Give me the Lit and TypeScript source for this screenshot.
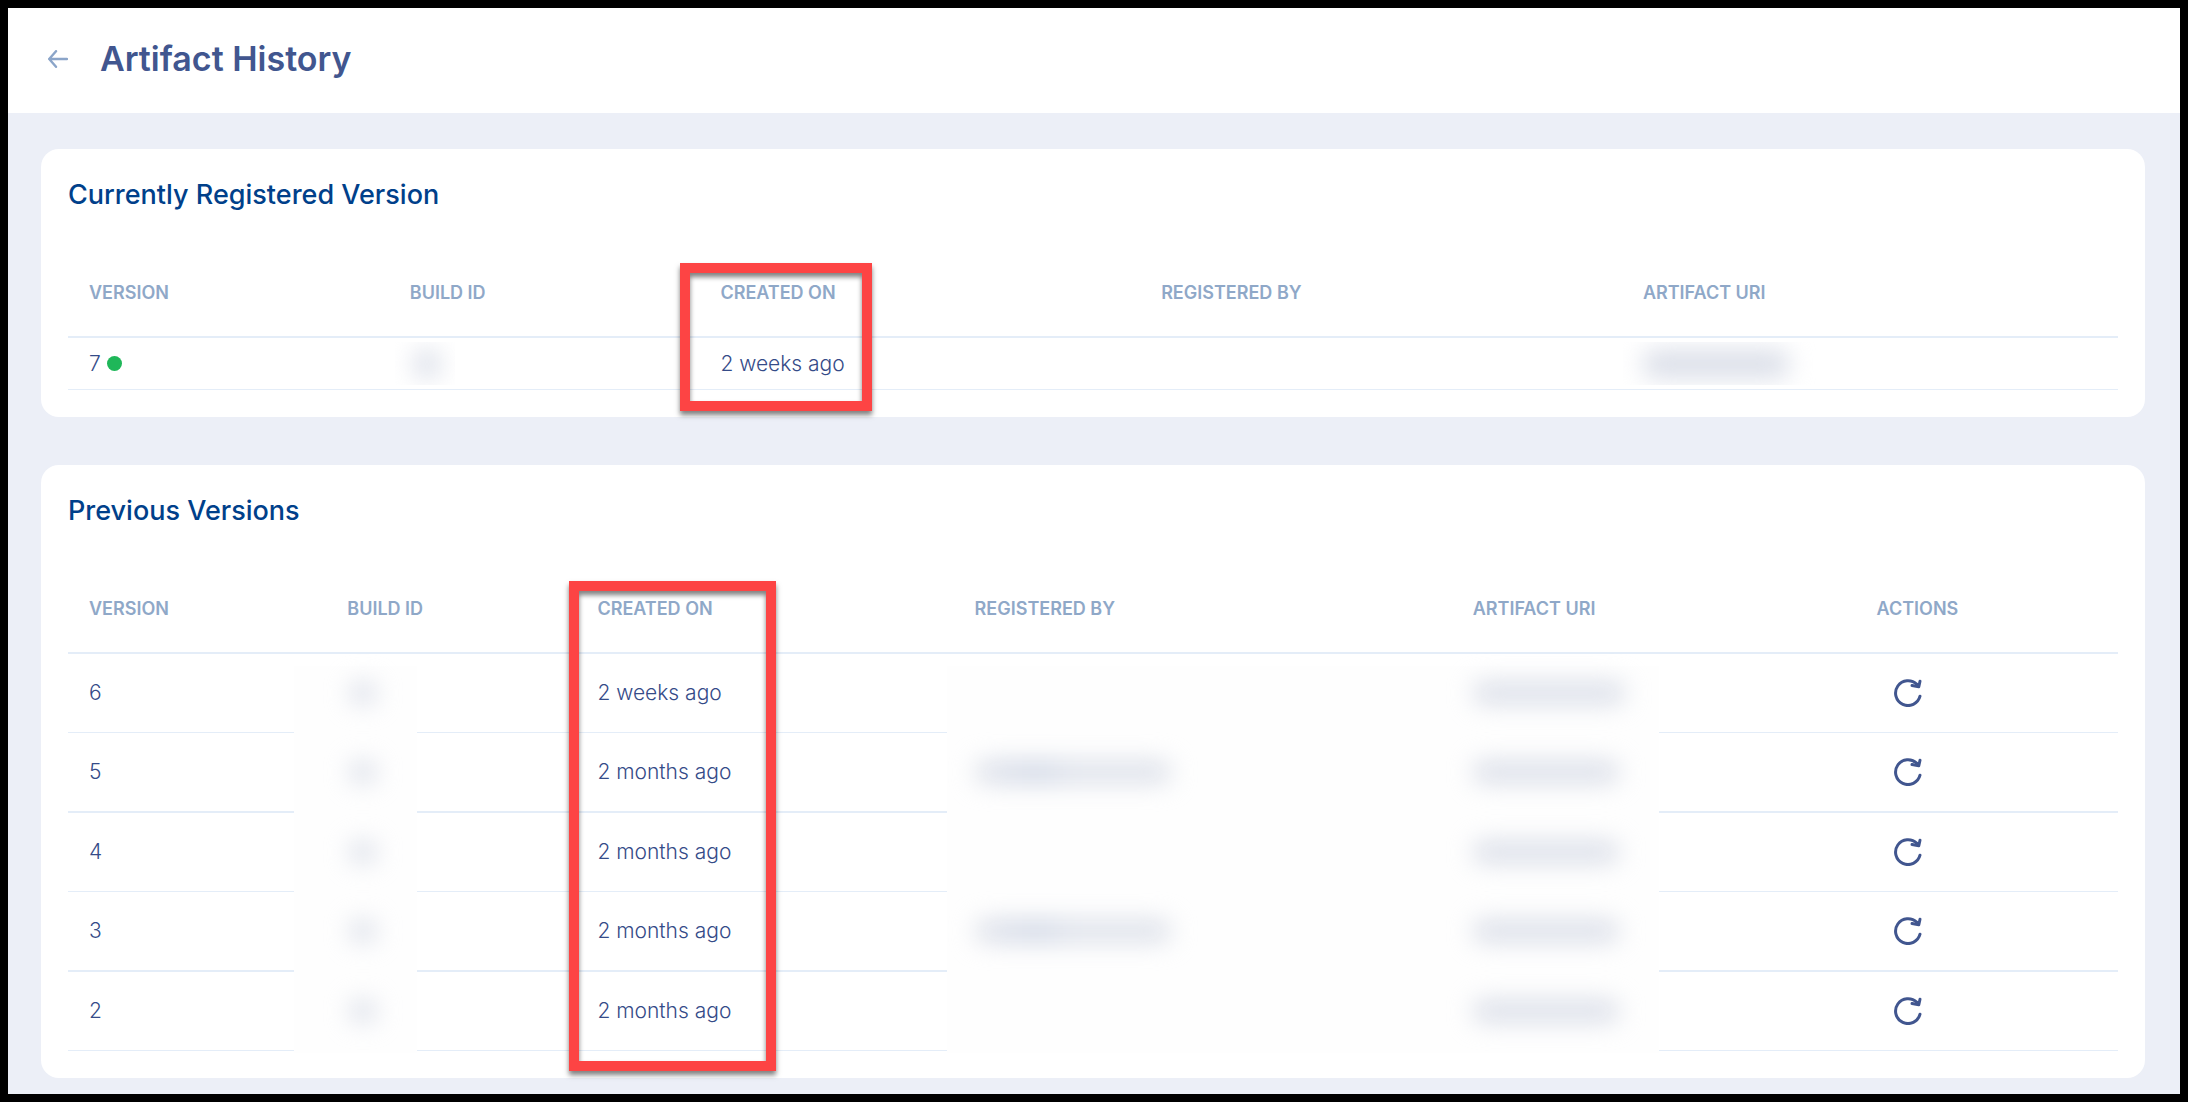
import { LitElement, html, css, nothing } from "lit";
import { customElement, property } from "lit/decorators.js";

interface Version {
  version: number;
  created: string;
  registeredBy: boolean;
  uri: "long" | "short";
}

const CURRENT: Version = { version: 7, created: "2 weeks ago", registeredBy: false, uri: "short" };

const PREVIOUS: Version[] = [
  { version: 6, created: "2 weeks ago", registeredBy: false, uri: "long" },
  { version: 5, created: "2 months ago", registeredBy: true, uri: "short" },
  { version: 4, created: "2 months ago", registeredBy: false, uri: "short" },
  { version: 3, created: "2 months ago", registeredBy: true, uri: "short" },
  { version: 2, created: "2 months ago", registeredBy: false, uri: "short" },
];

const tableStyles = css`
  :host {
    display: block;
    background: #fff;
    border-radius: 18px;
    padding: 30px 27px 27px;
  }
  h2 {
    margin: 0 0 39px;
    font-size: 27px;
    line-height: 32px;
    font-weight: 500;
    color: #00408a;
  }
  .wrap {
    position: relative;
  }
  table {
    width: 100%;
    table-layout: fixed;
    border-collapse: separate;
    border-spacing: 0;
  }
  th,
  td {
    box-sizing: border-box;
    padding: 0 0 0 21px;
    text-align: left;
    vertical-align: middle;
    white-space: nowrap;
  }
  th {
    height: 88px;
    font-size: 18px;
    line-height: 24px;
    font-weight: 600;
    color: #8fa8c8;
    border-bottom: 2px solid #e4edf8;
  }
  td {
    font-size: 21px;
    line-height: 28px;
    font-weight: 300;
    color: #354b88;
    border-bottom: 1px solid #e4edf8;
  }
  .highlight {
    position: absolute;
    box-sizing: border-box;
    border: 10px solid #fd4444;
    box-shadow:
      0 4px 5px rgba(0, 0, 0, 0.5),
      inset 0 4px 5px rgba(0, 0, 0, 0.5);
    pointer-events: none;
    z-index: 2;
  }
  .blur {
    display: block;
    position: relative;
    z-index: 1;
    height: 22px;
    border-radius: 10px;
    background: #dadee8;
    filter: blur(12px);
  }
  .blur.id {
    width: 26px;
    margin-left: 3px;
  }
  .blur.name {
    width: 196px;
    background: linear-gradient(90deg, #dfe2ea, #ced5e4 32%, #dce0e9 50%, #dce0e9);
  }
  .blur.uri {
    width: 146px;
  }
  .blur.uri.long {
    width: 152px;
  }
`;

@customElement("current-version")
class CurrentVersion extends LitElement {
  @property({ attribute: false }) item!: Version;

  static styles = [
    tableStyles,
    css`
      .c1 { width: 15.65%; }
      .c2 { width: 15.15%; }
      .c3 { width: 21.5%; }
      .c4 { width: 23.5%; }
      .c5 { width: 24.2%; }
      td {
        height: 52px;
      }
      .status {
        display: flex;
        align-items: center;
        gap: 6px;
      }
      .dot {
        width: 15px;
        height: 15px;
        border-radius: 50%;
        background: #1fb759;
      }
      .clip {
        display: flex;
        align-items: center;
        overflow: hidden;
        height: 43px;
        padding: 0 20px;
        margin-left: -20px;
      }
      .clip.small {
        width: 20px;
        margin-left: -15px;
      }
      .clip.small .blur {
        flex: none;
        margin-left: -1px;
      }
      .clip .blur {
        height: 28px;
      }
      .highlight {
        left: calc(30.8% - 19px);
        width: 192px;
        top: 13px;
        bottom: -21px;
      }
    `,
  ];

  render() {
    return html`
      <h2>Currently Registered Version</h2>
      <div class="wrap">
        <table>
          <colgroup>
            <col class="c1" /><col class="c2" /><col class="c3" /><col class="c4" /><col class="c5" />
          </colgroup>
          <thead>
            <tr>
              <th scope="col">VERSION</th>
              <th scope="col">BUILD ID</th>
              <th scope="col">CREATED ON</th>
              <th scope="col">REGISTERED BY</th>
              <th scope="col">ARTIFACT URI</th>
            </tr>
          </thead>
          <tbody>
            <tr>
              <td><span class="status">${this.item.version}<i class="dot"></i></span></td>
              <td><div class="clip small"><span class="blur id"></span></div></td>
              <td>${this.item.created}</td>
              <td></td>
              <td><div class="clip"><span class="blur uri"></span></div></td>
            </tr>
          </tbody>
        </table>
        <div class="highlight"></div>
      </div>
    `;
  }
}

@customElement("previous-versions")
class PreviousVersions extends LitElement {
  @property({ attribute: false }) items: Version[] = [];

  static styles = [
    tableStyles,
    css`
      .c1 { width: 12.6%; }
      .c2 { width: 12.2%; }
      .c3 { width: 18.4%; }
      .c4 { width: 24.3%; }
      .c5 { width: 19.7%; }
      .c6 { width: 12.8%; }
      td { height: 79px; }
      tbody tr:nth-child(even) td {
        height: 80px;
        border-bottom-width: 2px;
      }
      .cover {
        position: absolute;
        top: 100px;
        bottom: -2px;
        background: #fefefe;
      }
      .cover.ids {
        left: 11%;
        right: 83%;
      }
      .cover.people {
        left: calc(43.2% - 7px);
        right: 22.4%;
      }
      .highlight {
        left: calc(24.8% - 7px);
        width: 207px;
        top: 15px;
        bottom: -20px;
      }
      button {
        display: block;
        margin: 0 0 0 17px;
        padding: 0;
        border: 0;
        background: none;
        color: #41568f;
        cursor: pointer;
      }
      svg {
        display: block;
      }
    `,
  ];

  render() {
    return html`
      <h2>Previous Versions</h2>
      <div class="wrap">
        <table>
          <colgroup>
            <col class="c1" /><col class="c2" /><col class="c3" /><col class="c4" /><col class="c5" /><col class="c6" />
          </colgroup>
          <thead>
            <tr>
              <th scope="col">VERSION</th>
              <th scope="col">BUILD ID</th>
              <th scope="col">CREATED ON</th>
              <th scope="col">REGISTERED BY</th>
              <th scope="col">ARTIFACT URI</th>
              <th scope="col">ACTIONS</th>
            </tr>
          </thead>
          <tbody>
            ${this.items.map(
              (v) => html`
                <tr>
                  <td>${v.version}</td>
                  <td><span class="blur id"></span></td>
                  <td>${v.created}</td>
                  <td>${v.registeredBy ? html`<span class="blur name"></span>` : nothing}</td>
                  <td><span class="blur uri ${v.uri}"></span></td>
                  <td>
                    <button type="button" aria-label="Restore version ${v.version}">
                      <svg width="28" height="28" viewBox="0 0 28 28" fill="none" stroke="currentColor"
                        stroke-width="3" stroke-linecap="round" stroke-linejoin="round">
                        <path d="M26 17.2A12.4 12.4 0 1 1 22.8 5.4" />
                        <path d="M26 2.2L24.8 7.8L18 6.6L24.8 7.8L22.8 5.4" />
                      </svg>
                    </button>
                  </td>
                </tr>
              `
            )}
          </tbody>
        </table>
        <div class="cover ids"></div>
        <div class="cover people"></div>
        <div class="highlight"></div>
      </div>
    `;
  }
}

@customElement("app-root")
class AppRoot extends LitElement {
  static styles = css`
    :host {
      display: block;
      box-sizing: border-box;
      min-height: 100vh;
      border: 8px solid #000;
      background: #eceff7;
      font-family: Inter, "Liberation Sans", sans-serif;
    }
    header {
      display: flex;
      align-items: center;
      gap: 32px;
      box-sizing: border-box;
      height: 105px;
      padding: 0 40px 4px;
      background: #fff;
    }
    .back {
      display: block;
      color: #8ba5c9;
    }
    .back svg {
      display: block;
    }
    h1 {
      margin: 0;
      font-size: 34px;
      line-height: 40px;
      font-weight: 600;
      color: #41568f;
    }
    main {
      display: flex;
      flex-direction: column;
      gap: 48px;
      padding: 36px 35px 16px 33px;
    }
  `;

  render() {
    return html`
      <header>
        <a class="back" href="#" aria-label="Back">
          <svg width="20" height="18" viewBox="0 0 20 18" fill="none" stroke="currentColor"
            stroke-width="2.4" stroke-linecap="round" stroke-linejoin="round">
            <path d="M19 9H1.2M8 1.2L1.2 9L8 16.8" />
          </svg>
        </a>
        <h1>Artifact History</h1>
      </header>
      <main>
        <current-version .item=${CURRENT}></current-version>
        <previous-versions .items=${PREVIOUS}></previous-versions>
      </main>
    `;
  }
}
